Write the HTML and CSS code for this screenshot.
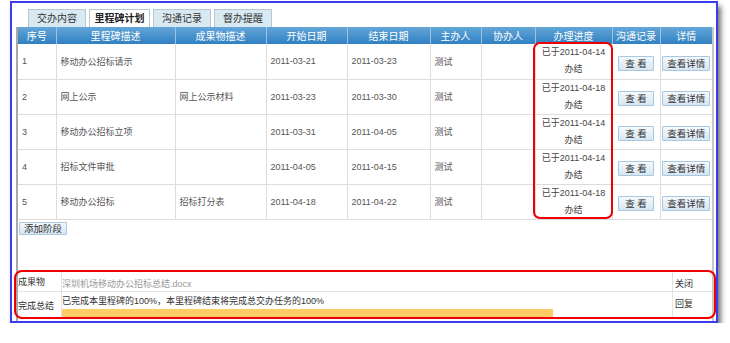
FILE: index.html
```html
<!DOCTYPE html>
<html lang="zh-CN">
<head>
    <meta charset="UTF-8">
    <title>里程碑计划</title>
    <link rel="stylesheet" href="styles.css">
</head>
<body>
  <div class="frame">
    <div class="tabs">
      <span class="tab">交办内容</span>
      <span class="tab active">里程碑计划</span>
      <span class="tab">沟通记录</span>
      <span class="tab">督办提醒</span>
    </div>
    <div class="panel">
      <div class="grid-wrap">
        <table class="grid">
          <thead>
            <tr>
              <th class="c-no">序号</th>
              <th class="c-desc">里程碑描述</th>
              <th class="c-out">成果物描述</th>
              <th class="c-date">开始日期</th>
              <th class="c-date2">结束日期</th>
              <th class="c-man">主办人</th>
              <th class="c-co">协办人</th>
              <th class="c-prog">办理进度</th>
              <th class="c-talk">沟通记录</th>
              <th class="c-det">详情</th>
            </tr>
          </thead>
          <tbody>
            <tr>
              <td>1</td><td>移动办公招标请示</td><td></td><td>2011-03-21</td><td>2011-03-23</td><td>测试</td><td></td>
              <td class="prog">已于2011-04-14<br>办结</td>
              <td class="mid"><button class="btn look">查 看</button></td>
              <td class="mid"><button class="btn">查看详情</button></td>
            </tr>
            <tr>
              <td>2</td><td>网上公示</td><td>网上公示材料</td><td>2011-03-23</td><td>2011-03-30</td><td>测试</td><td></td>
              <td class="prog">已于2011-04-18<br>办结</td>
              <td class="mid"><button class="btn look">查 看</button></td>
              <td class="mid"><button class="btn">查看详情</button></td>
            </tr>
            <tr>
              <td>3</td><td>移动办公招标立项</td><td></td><td>2011-03-31</td><td>2011-04-05</td><td>测试</td><td></td>
              <td class="prog">已于2011-04-14<br>办结</td>
              <td class="mid"><button class="btn look">查 看</button></td>
              <td class="mid"><button class="btn">查看详情</button></td>
            </tr>
            <tr>
              <td>4</td><td>招标文件审批</td><td></td><td>2011-04-05</td><td>2011-04-15</td><td>测试</td><td></td>
              <td class="prog">已于2011-04-14<br>办结</td>
              <td class="mid"><button class="btn look">查 看</button></td>
              <td class="mid"><button class="btn">查看详情</button></td>
            </tr>
            <tr>
              <td>5</td><td>移动办公招标</td><td>招标打分表</td><td>2011-04-18</td><td>2011-04-22</td><td>测试</td><td></td>
              <td class="prog">已于2011-04-18<br>办结</td>
              <td class="mid"><button class="btn look">查 看</button></td>
              <td class="mid"><button class="btn">查看详情</button></td>
            </tr>
          </tbody>
        </table>
        <div class="ring ring-prog"></div>
      </div>
      <button class="btn add">添加阶段</button>

      <div class="summary">
        <div class="srow s1">
          <div class="slabel">成果物</div>
          <div class="sval file">深圳机场移动办公招标总结.docx</div>
          <div class="sact">关闭</div>
        </div>
        <div class="srow s2">
          <div class="slabel">完成总结</div>
          <div class="sval">
            <div>已完成本里程碑的100%，本里程碑结束将完成总交办任务的100%</div>
            <div class="bar"><div class="fill" style="width: 491px"></div></div>
          </div>
          <div class="sact">回复</div>
        </div>
        <div class="ring ring-sum"></div>
      </div>
    </div>
  </div>
</body>
</html>
```

FILE: styles.css
```css
*{
    box-sizing: border-box;
}
body{
    margin: 0;
    background: #fff;
    font-family: "Liberation Sans", "Noto Sans CJK SC", sans-serif;
    font-size: 9px;
    color: #444;
}

.frame{
    width: 708px;
    height: 322px;
    margin: 1px 0 0 10px;
    border: 2px solid #3b3bf2;
    background: #fff;
    box-shadow: 3px 5px 5px rgba(0,0,0,0.55);
    display: flex;
    flex-direction: column;
    padding-left: 4px;
}

.tabs{
    display: flex;
    gap: 3px;
    margin: 6px 0 0 12px;
    height: 18px;
}
.tab{
    width: 58px;
    text-align: center;
    line-height: 17px;
    border: 1px solid #b8c6cf;
    border-bottom: none;
    background: #d9e9f2;
    color: #333;
    font-size: 10px;
}
.tab.active{
    background: #fff;
    font-weight: bold;
    color: #222;
    width: 61px;
}

.panel{
    flex: 1;
    width: 698px;
    border-left: 2px solid #a9a9a9;
    border-right: 2px solid #c8c8c8;
    display: flex;
    flex-direction: column;
}

.grid-wrap{
    position: relative;
}
.grid{
    border-collapse: collapse;
    width: 694px;
    table-layout: fixed;
}
.grid th{
    height: 17px;
    padding: 0;
    background: linear-gradient(#64a6d8, #2f80c2);
    color: #fff;
    font-weight: normal;
    font-size: 10px;
    border-left: 1px solid #9cc4e2;
}
.grid th:first-child{ border-left: none; }
.grid tbody tr{
    height: 35px;
}
.grid td{
    padding: 0 0 0 4px;
    border: 1px solid #ddd;
    border-top: none;
    color: #555;
    white-space: nowrap;
    overflow: hidden;
}
.grid td:first-child{ border-left: none; }
.grid td:last-child{ border-right: none; }
.c-no{ width: 38px; }
.c-desc{ width: 119px; }
.c-out{ width: 91px; }
.c-date{ width: 81px; }
.c-date2{ width: 83px; }
.c-man{ width: 51px; }
.c-co{ width: 54px; }
.c-prog{ width: 77px; }
.c-talk{ width: 48px; }
.c-det{ width: 52px; }

.grid td.prog{
    text-align: center;
    padding: 0;
    line-height: 17px;
    color: #444;
}
.grid td.mid{
    text-align: center;
    padding: 0;
}

.btn{
    font-family: inherit;
    font-size: 9.5px;
    color: #333;
    padding: 0 4px;
    height: 15px;
    line-height: 13px;
    border: 1px solid #a9c8e0;
    border-radius: 1px;
    background: linear-gradient(#f4f9fd, #d6e6f3);
}
.btn.look{
    padding: 0 6px;
}
.mid .btn{ margin-top: 4px; }

.add{
    align-self: flex-start;
    margin: 2px 0 0 1px;
    height: 13px;
    line-height: 11px;
}

.ring{
    position: absolute;
    border: 2px solid #ee0000;
    border-radius: 7px;
}
.ring-prog{
    left: 515px;
    top: 15px;
    width: 80px;
    height: 177px;
}

.summary{
    margin-top: auto;
    margin-bottom: 3px;
    position: relative;
    border-top: 1px solid #ddd;
}
.srow{
    display: flex;
    border-bottom: 1px solid #e4e4e4;
}
.s1{ height: 20px; }
.s2{ height: 26px; border-bottom: none; }
.slabel{
    width: 44px;
    border-right: 1px solid #e4e4e4;
    display: flex;
    align-items: center;
    color: #333;
}
.sval{
    flex: 1;
    padding-top: 2px;
    color: #333;
}
.sval.file{
    color: #999;
    padding-top: 5px;
}
.sact{
    width: 40px;
    border-left: 1px solid #e4e4e4;
    padding: 5px 0 0 2px;
    color: #333;
}
.bar{
    height: 10px;
    margin-top: 2px;
}
.fill{
    height: 100%;
    background: #ffcc66;
}
.ring-sum{
    left: -4px;
    top: -2px;
    width: 702px;
    height: 49px;
    border-radius: 8px;
}
```
